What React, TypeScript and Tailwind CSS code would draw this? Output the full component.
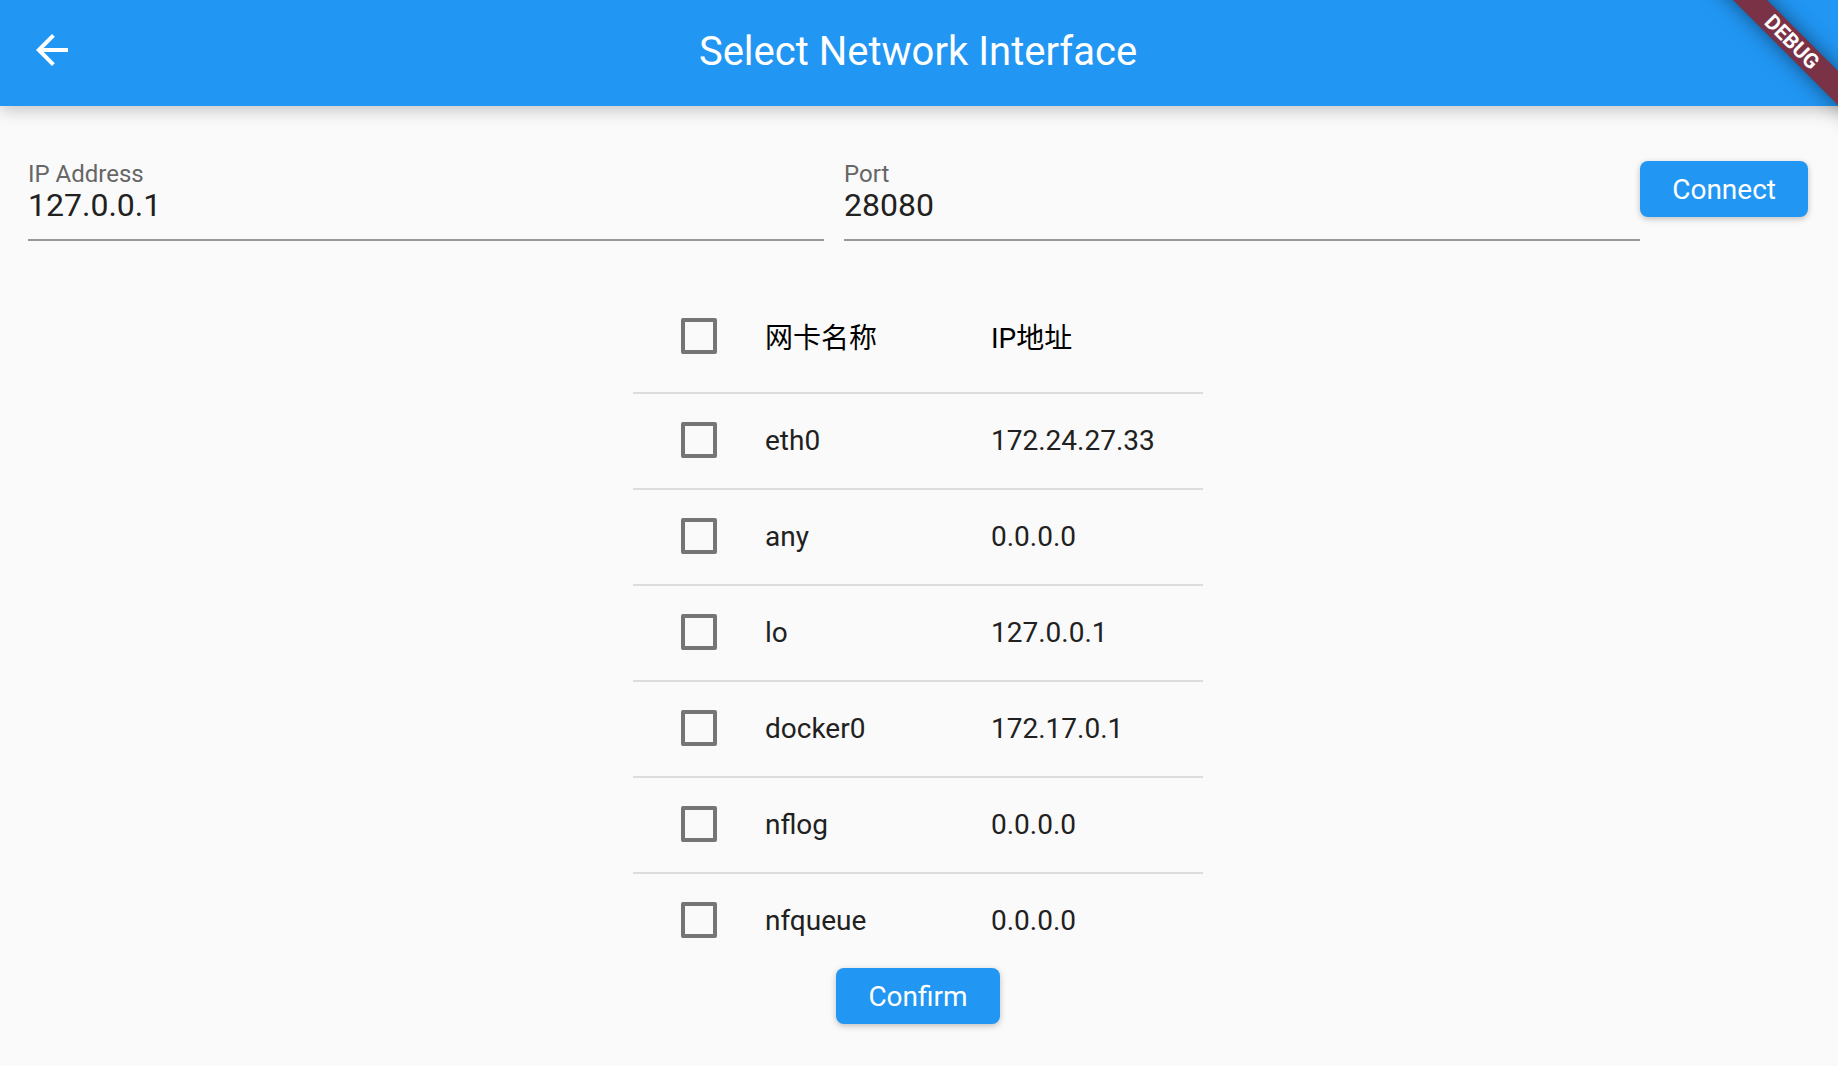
import { useState } from "react";

const interfaces = [
  { name: "eth0", ip: "172.24.27.33" },
  { name: "any", ip: "0.0.0.0" },
  { name: "lo", ip: "127.0.0.1" },
  { name: "docker0", ip: "172.17.0.1" },
  { name: "nflog", ip: "0.0.0.0" },
  { name: "nfqueue", ip: "0.0.0.0" },
];

const buttonClass =
  "h-14 shrink-0 cursor-pointer rounded-lg bg-[#2196f3] px-8 pt-0.5 text-[28px] leading-8 text-white shadow-[0_2px_6px_rgba(0,0,0,0.24)]";

function Field({ id, label, initial }: { id: string; label: string; initial: string }) {
  return (
    <div className="flex min-w-0 flex-1 flex-col border-b-2 border-[#989898] pb-4">
      <label htmlFor={id} className="text-2xl leading-[26px] text-[#666666]">
        {label}
      </label>
      <input
        id={id}
        type="text"
        defaultValue={initial}
        className="h-9 w-full bg-transparent text-[32px] leading-9 text-[#212121] outline-none"
      />
    </div>
  );
}

function Checkbox({
  label,
  checked,
  onChange,
}: {
  label: string;
  checked: boolean;
  onChange: () => void;
}) {
  return (
    <input
      type="checkbox"
      aria-label={label}
      checked={checked}
      onChange={onChange}
      className="block size-9 cursor-pointer appearance-none rounded-xs border-4 border-[#757575] checked:border-[#2196f3] checked:bg-[#2196f3]"
    />
  );
}

function DebugBanner() {
  return (
    <div className="pointer-events-none absolute top-0 right-0 size-40 overflow-hidden">
      <div className="absolute top-[30px] -right-[54px] w-[200px] rotate-45 bg-[#7a3247] text-center text-[21px] leading-6 font-bold text-white shadow-[0_0_20px_rgba(0,0,0,0.5)]">
        DEBUG
      </div>
    </div>
  );
}

export default function App() {
  const [selected, setSelected] = useState<string[]>([]);
  const allSelected = selected.length === interfaces.length;

  const toggle = (name: string) =>
    setSelected((s) => (s.includes(name) ? s.filter((n) => n !== name) : [...s, name]));

  return (
    <div className="relative flex min-h-screen flex-col bg-[#fafafa] font-[Roboto,'Noto_Sans_CJK_SC',sans-serif]">
      <header className="grid h-[106px] grid-cols-[48px_1fr_48px] items-center bg-[#2196f3] pr-[30px] pb-[6px] pl-7 text-white shadow-[0_4px_16px_rgba(0,0,0,0.22)]">
        <button type="button" aria-label="Back" className="size-12 cursor-pointer">
          <svg viewBox="0 0 24 24" className="size-12 fill-current" aria-hidden="true">
            <path d="M20 11H7.83l5.59-5.59L12 4l-8 8 8 8 1.41-1.41L7.83 13H20v-2z" />
          </svg>
        </button>
        <h1 className="pt-1 text-center text-[40px] leading-12">Select Network Interface</h1>
      </header>

      <form
        className="flex items-start pt-[55px] pr-[30px] pl-7"
        onSubmit={(e) => e.preventDefault()}
      >
        <div className="flex min-w-0 flex-1 gap-5">
          <Field id="ip" label="IP Address" initial="127.0.0.1" />
          <Field id="port" label="Port" initial="28080" />
        </div>
        <button type="submit" className={buttonClass}>
          Connect
        </button>
      </form>

      <main className="flex flex-col items-center pt-[39px] pr-0.5 pb-10">
        <table className="w-[570px] border-separate border-spacing-0 text-left text-[28px] leading-8 text-[#212121]">
          <thead>
            <tr className="h-28 text-black">
              <th className="w-[132px] p-0 pl-12">
                <Checkbox
                  label="Select all"
                  checked={allSelected}
                  onChange={() => setSelected(allSelected ? [] : interfaces.map((i) => i.name))}
                />
              </th>
              <th className="w-[226px] p-0 pt-1.5 font-normal">网卡名称</th>
              <th className="p-0 pt-1.5 font-normal">IP地址</th>
            </tr>
          </thead>
          <tbody>
            {interfaces.map((item) => (
              <tr key={item.name} className="h-24">
                <td className="border-t-2 border-[#dcdcdc] p-0 pb-0.5 pl-12">
                  <Checkbox
                    label={item.name}
                    checked={selected.includes(item.name)}
                    onChange={() => toggle(item.name)}
                  />
                </td>
                <td className="border-t-2 border-[#dcdcdc] p-0">{item.name}</td>
                <td className="border-t-2 border-[#dcdcdc] p-0">{item.ip}</td>
              </tr>
            ))}
          </tbody>
        </table>
        <button type="button" className={buttonClass}>
          Confirm
        </button>
      </main>

      <DebugBanner />
    </div>
  );
}
